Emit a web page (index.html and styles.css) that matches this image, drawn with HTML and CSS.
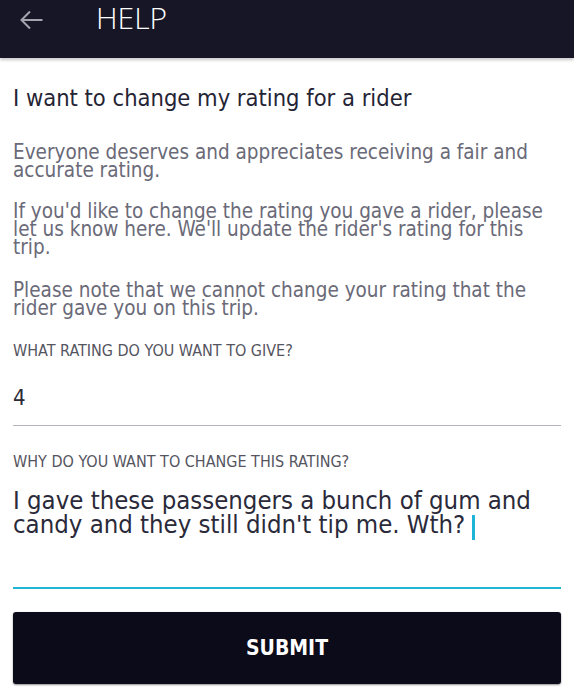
FILE: index.html
```html
<!DOCTYPE html>
<html>
<head>
<meta charset="utf-8">
<link rel="stylesheet" href="styles.css">
</head>
<body>
<header class="topbar">
  <svg class="back" width="24" height="20" viewBox="0 0 24 20"><path d="M23.5 10H2.5M11 1.5L2.5 10l8.5 8.5" fill="none" stroke="#a4a4ae" stroke-width="2"/></svg>
  <span class="topbar-title">HELP</span>
</header>
<main class="content">
  <h1 class="title">I want to change my rating for a rider</h1>
  <p class="para para-first">Everyone deserves and appreciates receiving a fair and<br>accurate rating.</p>
  <p class="para para-second">If you'd like to change the rating you gave a rider, please<br>let us know here. We'll update the rider's rating for this<br>trip.</p>
  <p class="para para-third">Please note that we cannot change your rating that the<br>rider gave you on this trip.</p>
  <div class="field field-rating">
    <div class="label">WHAT RATING DO YOU WANT TO GIVE?</div>
    <div class="value">4</div>
  </div>
  <div class="field field-active">
    <div class="label">WHY DO YOU WANT TO CHANGE THIS RATING?</div>
    <div class="textval">I gave these passengers a bunch of gum and<br>candy and they still didn't tip me. Wth?<span class="caret"></span></div>
  </div>
  <button class="submit">SUBMIT</button>
</main>
</body>
</html>
```
FILE: styles.css
```css
html, body { margin: 0; padding: 0; background: #fff; }
body { width: 574px; height: 698px; overflow: hidden; font-family: "DejaVu Sans Condensed", "DejaVu Sans", sans-serif; }
.topbar {
  height: 58px; background: #161626; display: flex; align-items: flex-start;
  padding-left: 19px; box-shadow: 0 2px 3px rgba(0,0,0,0.22); position: relative;
}
.back { margin-top: 10px; }
.topbar-title { color: #fff; font-family: "Open Sans", sans-serif; font-weight: 300; font-size: 30px; line-height: 36px; margin-left: 53px; margin-top: 0; }
.content { padding: 0 13px; }
.title { font-weight: 400; font-size: 23.5px; line-height: 30px; color: #242434; margin: 25px 0 0; white-space: nowrap; }
.para { font-size: 20.5px; line-height: 18px; color: #6a6a78; margin: 0; white-space: nowrap; }
.para-first { margin-top: 30px; }
.para-second { margin-top: 23px; }
.para-third { margin-top: 25px; }
.label { font-size: 16px; line-height: 18px; color: #55555f; white-space: nowrap; }
.field { border-bottom: 1px solid #b4b4bc; }
.field-rating { margin-top: 25px; }
.value { font-size: 22px; color: #2a2a36; line-height: 30px; padding: 23px 0 12px; }
.field-active { margin-top: 27px; border-bottom: 2px solid #22b4d4; }
.textval { font-size: 25.5px; line-height: 24px; color: #2a2a3a; padding: 17px 0 47px; white-space: nowrap; }
.caret { display: inline-block; width: 3px; height: 25px; background: #1db4d8; vertical-align: -7px; margin-left: 7px; }
.submit {
  display: block; width: 100%; height: 72px; margin-top: 23px; border: none; border-radius: 3px;
  background: #0b0b19; color: #fff; font-family: "DejaVu Sans Condensed", "DejaVu Sans", sans-serif; font-weight: 700; font-size: 21px;
  box-shadow: 0 1px 2px rgba(0,0,0,0.45);
}
```
